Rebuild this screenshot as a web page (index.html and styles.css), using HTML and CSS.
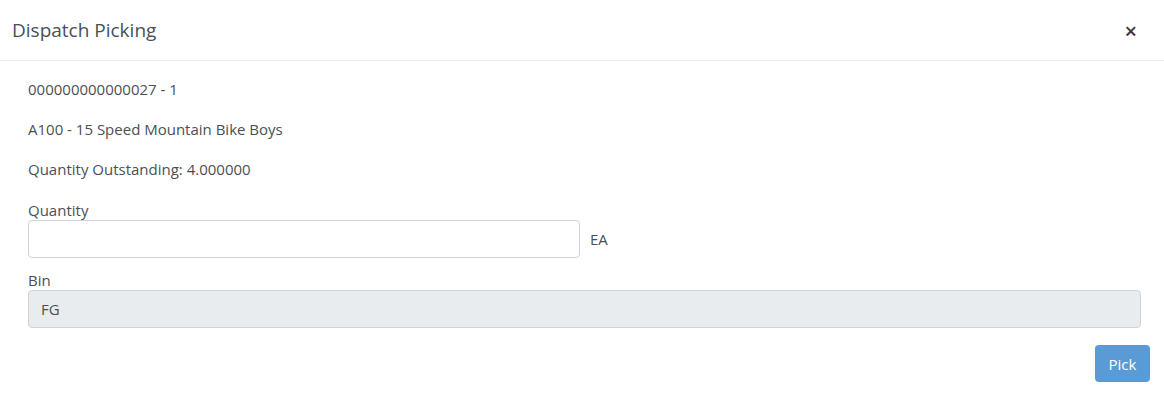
FILE: index.html
```html
<!DOCTYPE html>
<html>
<head>
<meta charset="utf-8">
<link rel="stylesheet" href="styles.css">
</head>
<body>
<div class="modal">
  <div class="modal-header">
    <h5 class="modal-title">Dispatch Picking</h5>
    <button class="close" type="button">&times;</button>
  </div>
  <div class="modal-body">
    <p class="line">000000000000027 - 1</p>
    <p class="line">A100 - 15 Speed Mountain Bike Boys</p>
    <p class="line last">Quantity Outstanding: 4.000000</p>
    <div class="form-group">
      <label class="label">Quantity</label>
      <div class="qty-row">
        <input class="form-control qty" type="text">
        <span class="uom">EA</span>
      </div>
    </div>
    <div class="form-group">
      <label class="label">Bin</label>
      <input class="form-control readonly" type="text" value="FG" readonly>
    </div>
  </div>
  <div class="modal-footer">
    <button class="btn" type="button">Pick</button>
  </div>
</div>
</body>
</html>
```
FILE: styles.css
```css
* { box-sizing: border-box; }
html, body { margin: 0; padding: 0; background: #fff; }
body {
  font-family: "Open Sans", "Noto Sans", sans-serif;
  font-size: 15px;
  color: #495057;
}
.modal { width: 1164px; height: 403px; background: #fff; }
.modal-header {
  height: 61px;
  display: flex;
  align-items: center;
  justify-content: space-between;
  padding: 0 27px 0 12px;
  border-bottom: 1px solid #e9ecef;
}
.modal-title {
  margin: 0;
  font-size: 19px;
  font-weight: 400;
  color: #495057;
  line-height: 24px;
}
.close {
  border: 0;
  background: none;
  padding: 0;
  font-family: "Open Sans", sans-serif;
  font-size: 22px;
  font-weight: 600;
  color: #3a3a3a;
  line-height: 1;
  cursor: pointer;
}
.modal-body { padding: 18px 23px 0 28px; }
.line { margin: 0 0 20px; line-height: 20px; }
.line.last { margin-bottom: 21px; }
.label { display: block; line-height: 20px; }
.form-group { margin-bottom: 12px; }
.qty-row { display: flex; align-items: center; gap: 10px; }
.form-control {
  display: block;
  height: 38px;
  border: 1px solid #ced4da;
  border-radius: 4px;
  padding: 6px 12px;
  font-family: inherit;
  font-size: 15px;
  color: #495057;
  background: #fff;
  outline: none;
}
.qty { width: 552px; }
.readonly { width: 100%; background: #e9ecef; }
.uom { line-height: 20px; }
.modal-footer {
  display: flex;
  justify-content: flex-end;
  padding: 5px 14px 0 0;
}
.btn {
  height: 37px;
  width: 55px;
  border: 0;
  border-radius: 4px;
  background: #5b9bd5;
  color: #fff;
  font-family: inherit;
  font-size: 15px;
  padding: 0;
}
```
